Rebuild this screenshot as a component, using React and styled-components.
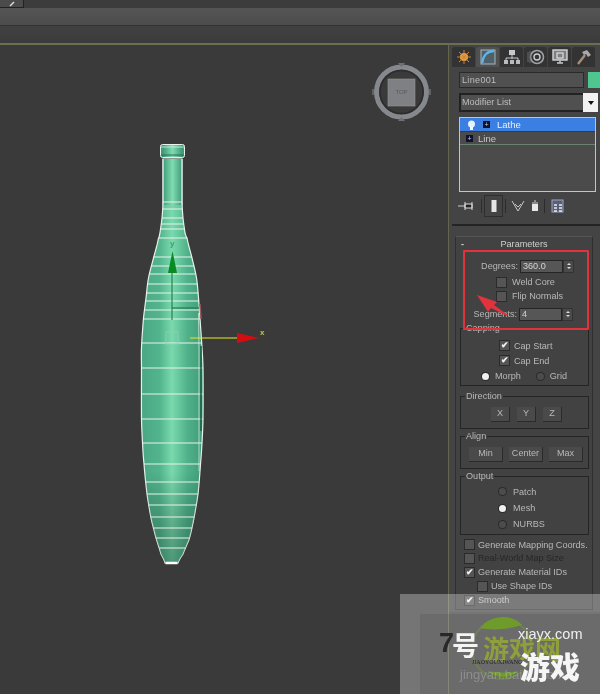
import React from "react";
import styled, { createGlobalStyle } from "styled-components";

const Global = createGlobalStyle`
  html, body { margin: 0; padding: 0; background: #3a3a3a; }
`;
const Page = styled.div`
  position: relative;
  width: 600px;
  height: 694px;
  overflow: hidden;
  display: flex;
  flex-direction: column;
  font-family: "Liberation Sans", Arial, sans-serif;
  font-size: 9.1px;
  color: #c4c4c4;
  background: #3a3a3a;
`;
const TopStrip = styled.div`
  height: 8px;
  flex: none;
  background: #3c3c3c;
  display: flex;
`;
const TopButton = styled.div`
  width: 23px;
  height: 7px;
  background: #4b4b4b;
  border: solid #222;
  border-width: 0 1px 1px 0;
  display: flex;
  justify-content: center;
  align-items: center;
`;
const MenuBand = styled.div`
  height: 17px;
  flex: none;
  background: linear-gradient(#555, #4c4c4c);
  border-bottom: 1px solid #333;
`;
const RibbonBand = styled.div`
  height: 17px;
  flex: none;
  background: linear-gradient(#414141, #3b3b3b);
  border-bottom: 2px solid #6d6e50;
`;
const Main = styled.div`
  flex: 1;
  display: flex;
  min-height: 0;
`;
const Viewport = styled.div`
  width: 448px;
  flex: none;
  background: #3a3a3a;
  border-right: 1px solid #65654e;
`;
const Scene = styled.svg`
  display: block;
  width: 448px;
  height: 650px;
  filter: blur(0.4px);
`;
const Panel = styled.div`
  width: 151px;
  flex: none;
  background: #444;
  display: flex;
  flex-direction: column;
  height: 567px;
  filter: blur(0.35px);
`;
const Tabs = styled.div`
  display: flex;
  gap: 1px;
  padding: 2px 0 0 3px;
  height: 20px;
  flex: none;
`;
const Tab = styled.div`
  width: 23px;
  height: 20px;
  background: ${(p) => (p.$active ? "#505050" : "#333")};
  border-radius: 3px 3px 0 0;
  display: flex;
  align-items: center;
  justify-content: center;
`;
const NameRow = styled.div`
  display: flex;
  gap: 4px;
  margin: 5px 0 0 10px;
  flex: none;
`;
const NameField = styled.div`
  width: 121px;
  height: 14px;
  background: #505050;
  border: 1px solid #2a2a2a;
  line-height: 14px;
  padding-left: 2px;
  letter-spacing: 0.3px;
  color: #bdbdbd;
`;
const Swatch = styled.div`
  width: 12px;
  height: 16px;
  background: #4fc68f;
`;
const ModifierRow = styled.div`
  display: flex;
  margin: 5px 0 0 10px;
  height: 19px;
  flex: none;
`;
const ModifierField = styled.div`
  width: 121px;
  background: #505050;
  border: solid #222;
  border-width: 2px 0 2px 2px;
  line-height: 15px;
  padding-left: 1px;
  color: #bdbdbd;
`;
const ModifierArrow = styled.div`
  width: 15px;
  background: #f2f2f2;
  display: flex;
  align-items: center;
  justify-content: center;
  &::after {
    content: "";
    border: 3px solid transparent;
    border-top: 4px solid #111;
    margin-top: 4px;
  }
`;
const Stack = styled.div`
  margin: 5px 0 0 10px;
  width: 135px;
  height: 73px;
  flex: none;
  background: #4b4b4b;
  border: 1px solid #b8c6dc;
`;
const StackRow = styled.div`
  display: flex;
  align-items: center;
  height: ${(p) => (p.$selected ? 13 : 12)}px;
  background: ${(p) => (p.$selected ? "#3c7fe2" : "transparent")};
  color: ${(p) => (p.$selected ? "#e6eefc" : "#c8c8c8")};
  border-bottom: ${(p) => (p.$selected ? "1px solid #3a3a3a" : "1px solid #6b7f72")};
  padding-left: ${(p) => p.$pad}px;
  gap: ${(p) => p.$gap}px;
  font-size: 9.5px;
`;
const PlusBox = styled.span`
  width: 7px;
  height: 7px;
  background: #0c1230;
  color: #ccd;
  font-size: 7px;
  line-height: 7px;
  text-align: center;
`;
const ToolRow = styled.div`
  display: flex;
  align-items: center;
  height: 22px;
  margin-top: 3px;
  padding-left: 6px;
  flex: none;
`;
const ToolSlot = styled.div`
  width: ${(p) => p.$w}px;
  height: 22px;
  display: flex;
  align-items: center;
  justify-content: center;
  box-sizing: border-box;
  border: ${(p) => (p.$on ? "1px solid #2e2e2e" : "0")};
`;
const ToolSep = styled.div`
  width: 1px;
  height: 14px;
  margin: 0 2px;
  background: #2c2c2c;
`;
const Divider = styled.div`
  height: 2px;
  margin: 7px 0 0 3px;
  background: #242424;
  flex: none;
`;
const Rollout = styled.div`
  margin: 10px 0 0 6px;
  width: 136px;
  height: 372px;
  border: 1px solid #2e2e2e;
  border-top-color: #555;
  flex: none;
  display: flex;
  flex-direction: column;
  background: #424242;
`;
const RolloutTitle = styled.div`
  position: relative;
  height: 21px;
  line-height: 15px;
  text-align: center;
  color: #d0d0d0;
  flex: none;
  &::before {
    content: "-";
    position: absolute;
    left: 5px;
    top: 0;
    font-weight: bold;
  }
`;
const Row = styled.div`
  display: flex;
  align-items: center;
  height: ${(p) => p.$h || 15}px;
  margin-top: ${(p) => p.$mt || 0}px;
  padding-left: ${(p) => p.$x || 0}px;
  flex: none;
  white-space: nowrap;
`;
const Label = styled.span`
  margin-left: ${(p) => p.$gap ?? 5}px;
  width: ${(p) => (p.$w ? `${p.$w}px` : "auto")};
  text-align: ${(p) => (p.$w ? "right" : "left")};
  color: ${(p) => p.$color || "#b8b8b8"};
`;
const Spinner = styled.div`
  display: flex;
  margin-left: 2px;
  height: 13px;
`;
const SpinnerField = styled.div`
  width: 43px;
  background: #565656;
  border: 1px solid #242424;
  box-sizing: border-box;
  line-height: 11px;
  padding-left: 2px;
  color: #d4d4d4;
`;
const SpinnerArrows = styled.div`
  width: 11px;
  background: #4a4a4a;
  border: 1px solid #333;
  box-sizing: border-box;
  display: flex;
  flex-direction: column;
  align-items: center;
  justify-content: center;
  gap: 2px;
  &::before {
    content: "";
    border: 2px solid transparent;
    border-top: 0;
    border-bottom: 2px solid #ddd;
  }
  &::after {
    content: "";
    border: 2px solid transparent;
    border-bottom: 0;
    border-top: 2px solid #ddd;
  }
`;
const Check = styled.span`
  width: 9px;
  height: 9px;
  flex: none;
  background: #555;
  border: 1px solid #2b2b2b;
  display: flex;
  align-items: center;
  justify-content: center;
  color: #f2f2f2;
  font-size: 9px;
  line-height: 9px;
  font-weight: bold;
`;
const Radio = styled.span`
  width: 7px;
  height: 7px;
  flex: none;
  margin-left: ${(p) => p.$ml || 0}px;
  border-radius: 50%;
  background: ${(p) => (p.$on ? "#f0f0f0" : "#4c4c4c")};
  box-shadow: 0 0 0 1px #2b2b2b;
`;
const Group = styled.div`
  margin: ${(p) => p.$mt}px 0 0 4px;
  width: 127px;
  height: ${(p) => p.$h}px;
  flex: none;
  border: 1px solid #252525;
  display: flex;
  flex-direction: column;
`;
const Legend = styled.div`
  margin: -6px 0 0 4px;
  padding: 0 1px;
  height: 11px;
  line-height: 11px;
  width: fit-content;
  background: #424242;
  color: #b8b8b8;
  flex: none;
`;
const Buttons = styled.div`
  display: flex;
  gap: ${(p) => p.$gap}px;
  padding-left: ${(p) => p.$x}px;
  margin-top: ${(p) => p.$mt || 0}px;
`;
const PushButton = styled.div`
  width: ${(p) => p.$w}px;
  height: 14px;
  line-height: 13px;
  text-align: center;
  background: #4a4a4a;
  border: solid #2a2a2a;
  border-width: 0 1px 1px 0;
  color: #b8b8b8;
`;
const Annotation = styled.div`
  position: absolute;
  left: 463px;
  top: 250px;
  width: 122px;
  height: 76px;
  border: 2px solid #e2333c;
  border-radius: 1px;
`;
const ArrowMark = styled.svg`
  position: absolute;
  left: 474px;
  top: 292px;
  width: 36px;
  height: 26px;
`;
const Watermark = styled.div`
  position: absolute;
  left: 400px;
  top: 594px;
  width: 200px;
  height: 100px;
  background: rgba(255, 255, 255, 0.3);
  filter: blur(0.3px);
`;
const WatermarkPlate = styled.div`
  position: absolute;
  left: 20px;
  top: 20px;
  right: 0;
  bottom: 0;
  background: rgba(40, 40, 40, 0.12);
`;
const Seal = styled.svg`
  position: absolute;
  left: 70px;
  top: 19px;
  width: 66px;
  height: 72px;
`;
const Mark = styled.span`
  position: absolute;
  left: ${(p) => p.$x}px;
  top: ${(p) => p.$y}px;
  font-family: ${(p) => p.$font || '"Noto Sans CJK SC", sans-serif'};
  font-size: ${(p) => p.$size}px;
  font-weight: ${(p) => p.$weight || 700};
  line-height: 1;
  color: ${(p) => p.$color};
  white-space: nowrap;
`;

// bottle profile: [y, left x, right x]
const profile = [
  [158, 163, 182], [201, 163, 182], [217, 162, 183], [232, 160, 185], [237, 158.5, 187],
  [257, 153.5, 192], [277, 148.5, 196.5], [297, 146, 198.5], [317, 143.5, 200], [347, 141.5, 202],
  [367, 141.5, 203], [418, 141.5, 203], [442, 142.5, 202], [463, 144, 200.5], [493, 147, 198],
  [517, 151, 194], [537, 156, 189.5], [553, 161, 183], [562, 165, 178],
];
// smooth the profile so the tip and shoulder read as curves
const catmull = (a, b, c, d, t) =>
  0.5 * (2 * b + (c - a) * t + (2 * a - 5 * b + 4 * c - d) * t * t + (3 * b - a - 3 * c + d) * t * t * t);
const outline = [];
for (let i = 0; i < profile.length - 1; i++) {
  const p0 = profile[Math.max(i - 1, 0)];
  const p1 = profile[i];
  const p2 = profile[i + 1];
  const p3 = profile[Math.min(i + 2, profile.length - 1)];
  for (let s = 0; s < 6; s++) {
    const t = s / 6;
    outline.push([
      p1[0] + (p2[0] - p1[0]) * t,
      catmull(p0[1], p1[1], p2[1], p3[1], t),
      catmull(p0[2], p1[2], p2[2], p3[2], t),
    ]);
  }
}
outline.push(profile[profile.length - 1]);

const rings = [
  201, 208, 217, 223, 228, 237, 256, 265, 273, 283, 292, 300, 309, 318, 342, 367, 393, 418,
  442, 463, 481, 493, 504, 516, 527, 537, 547,
];
const edgeAt = (y) => {
  for (let i = 0; i < outline.length - 1; i++) {
    const a = outline[i];
    const b = outline[i + 1];
    if (y >= a[0] && y <= b[0]) {
      const t = (y - a[0]) / (b[0] - a[0]);
      return [a[1] + (b[1] - a[1]) * t, a[2] + (b[2] - a[2]) * t];
    }
  }
  return [160, 180];
};
const bodyPath =
  "M" +
  outline.map((p) => `${p[1]} ${p[0]}`).join(" L") +
  " L" +
  [...outline].reverse().map((p) => `${p[2]} ${p[0]}`).join(" L") +
  " Z";

const Bottle = () => (
  <g>
    <defs>
      <linearGradient id="glass" x1="141" x2="203" y1="0" y2="0" gradientUnits="userSpaceOnUse">
        <stop offset="0" stopColor="#4aa884" />
        <stop offset="0.3" stopColor="#52b48c" />
        <stop offset="0.5" stopColor="#7ad9ad" />
        <stop offset="0.75" stopColor="#4fb18a" />
        <stop offset="1" stopColor="#3f9c78" />
      </linearGradient>
      <linearGradient id="neck" x1="163" x2="182" y1="0" y2="0" gradientUnits="userSpaceOnUse">
        <stop offset="0" stopColor="#3f9c78" />
        <stop offset="0.5" stopColor="#80dcb2" />
        <stop offset="1" stopColor="#3f9c78" />
      </linearGradient>
      <linearGradient id="tip" x1="0" x2="0" y1="470" y2="562" gradientUnits="userSpaceOnUse">
        <stop offset="0" stopColor="#000" stopOpacity="0" />
        <stop offset="1" stopColor="#0a3a28" stopOpacity="0.4" />
      </linearGradient>
    </defs>
    <path d={bodyPath} fill="url(#glass)" stroke="#e4f2eb" strokeWidth="1.2" />
    <path d={bodyPath} fill="url(#tip)" />
    <rect x="163.5" y="158" width="18" height="46" fill="url(#neck)" />
    <line x1="163" y1="158" x2="163" y2="204" stroke="#dcefe6" />
    <line x1="182" y1="158" x2="182" y2="204" stroke="#dcefe6" />
    <rect x="160.5" y="143.5" width="24" height="13" rx="2" fill="url(#neck)" stroke="#e4f4ec" />
    <line x1="161" y1="146" x2="184" y2="146" stroke="#dff2e9" strokeWidth="0.8" />
    <line x1="161" y1="154" x2="184" y2="154" stroke="#2c6a54" strokeWidth="1" />
    {rings.map((y) => {
      const [l, r] = edgeAt(y);
      return <line key={y} x1={l} y1={y} x2={r} y2={y} stroke="#e6f3ec" strokeWidth="1" />;
    })}
    <path d="M198.5 312 L199 350 L199 470" fill="none" stroke="#cfe6da" strokeWidth="0.8" />
    <path d="M201 345 L201 430" fill="none" stroke="#14593f" strokeWidth="1.4" />
    <path d="M200 303 L201 318" fill="none" stroke="#a05a5a" strokeWidth="1.4" />
    <path d="M165.5 562 L177.5 562" stroke="#fff" strokeWidth="2.5" />
  </g>
);

const Gizmo = () => (
  <g fontFamily="Liberation Sans, sans-serif" fontWeight="bold" fontSize="8">
    <rect x="166" y="331" width="12" height="12" fill="none" stroke="#8fd0b2" strokeWidth="0.8" />
    <line x1="172" y1="268" x2="172" y2="319" stroke="#14703c" strokeWidth="1" />
    <line x1="172" y1="307" x2="199" y2="307" stroke="#14703c" strokeWidth="1" />
    <polygon points="172.5,250 177,272 168,272" fill="#0a8a22" />
    <text x="170" y="245" fill="#3ea05a">y</text>
    <line x1="190" y1="337" x2="238" y2="337" stroke="#e8e820" strokeWidth="1" />
    <polygon points="237,332 259,337 237,342" fill="#d40d12" />
    <text x="260" y="334" fill="#c4c44a">x</text>
  </g>
);

const ViewCube = () => (
  <g>
    <circle cx="401.5" cy="91" r="25" fill="#3a3a3a" stroke="#85898d" strokeWidth="5" />
    <circle cx="401.5" cy="91" r="21.5" fill="none" stroke="#2c2c2c" strokeWidth="1.5" />
    <rect x="388" y="78" width="27" height="27" fill="#7f8084" stroke="#94959a" strokeWidth="0.6" />
    <text x="401.5" y="93" textAnchor="middle" fontSize="6" fill="#5a5a5e" fontFamily="Liberation Sans, sans-serif">
      TOP
    </text>
    <polygon points="398,62 405,62 401.5,66" fill="#6e7074" />
    <polygon points="398,120 405,120 401.5,116" fill="#6e7074" />
    <rect x="372" y="88" width="2" height="6" fill="#5f6165" />
    <rect x="429" y="88" width="2" height="6" fill="#5f6165" />
  </g>
);

const ArrowSlot = () => (
  <svg width="20" height="16" viewBox="0 0 20 16">
    <line x1="1" y1="8" x2="8" y2="8" stroke="#ccc" />
    <path d="M8 4 L8 12 M15 4 L15 12 M8 6 L15 6 L15 10 L8 10 Z" stroke="#ddd" fill="#222" />
  </svg>
);

const TabIcons = [
  <svg key="a" width="16" height="16" viewBox="0 0 16 16">
    <circle cx="8" cy="8" r="4" fill="#f0a64a" />
    <path d="M8 1 V15 M1 8 H15 M3 3 L13 13 M13 3 L3 13" stroke="#c98434" strokeWidth="1" />
  </svg>,
  <svg key="b" width="18" height="18" viewBox="0 0 18 18">
    <rect x="2" y="2" width="14" height="14" fill="#4f6068" stroke="#a7b6bd" />
    <path d="M3 15 C4 7 9 3 15 3" fill="none" stroke="#5fb4ec" strokeWidth="2.4" />
  </svg>,
  <svg key="c" width="18" height="16" viewBox="0 0 18 16">
    <rect x="6" y="1" width="6" height="5" fill="#c4c8cc" />
    <path d="M9 6 V10 M3 12 V9 H15 V12" stroke="#c4c8cc" fill="none" />
    <rect x="1" y="11" width="4" height="4" fill="#b8bcc0" />
    <rect x="7" y="11" width="4" height="4" fill="#b8bcc0" />
    <rect x="13" y="11" width="4" height="4" fill="#b8bcc0" />
  </svg>,
  <svg key="d" width="18" height="16" viewBox="0 0 18 16">
    <circle cx="10" cy="8" r="6.5" fill="none" stroke="#9ea2a6" strokeWidth="1.6" />
    <circle cx="10" cy="8" r="3" fill="none" stroke="#c8cbce" strokeWidth="1.4" />
    <path d="M1 3 V13 M3 2 V14" stroke="#6a6a6a" />
  </svg>,
  <svg key="e" width="18" height="16" viewBox="0 0 18 16">
    <rect x="2" y="1" width="14" height="10" fill="#7c8084" stroke="#d4d6d8" strokeWidth="1.4" />
    <rect x="6" y="4" width="6" height="5" fill="none" stroke="#eee" />
    <path d="M6 14 H12 M9 11 V14" stroke="#c8c8c8" strokeWidth="1.4" />
  </svg>,
  <svg key="f" width="18" height="16" viewBox="0 0 18 16">
    <path d="M3 15 L10 6" stroke="#a58e76" strokeWidth="2.4" />
    <path d="M7 3 L12 1 L16 6 L13 8 L11 5 L9 6 Z" fill="#a9a9a9" />
  </svg>,
];

const Spin = ({ label, value, w, x, mt }) => (
  <Row $x={x} $mt={mt} $h={16}>
    <Label $gap={0} $w={w}>{label}</Label>
    <Spinner>
      <SpinnerField>{value}</SpinnerField>
      <SpinnerArrows />
    </Spinner>
  </Row>
);

const CheckRow = ({ label, on, x, mt, h, color, gap }) => (
  <Row $x={x} $mt={mt} $h={h}>
    <Check>{on ? "✔" : ""}</Check>
    <Label $color={color} $gap={gap}>{label}</Label>
  </Row>
);

export default function App() {
  return (
    <Page>
      <Global />
      <TopStrip>
        <TopButton>
          <svg width="6" height="6" viewBox="0 0 6 6">
            <path d="M1 5 L5 1" stroke="#ddd" strokeWidth="1.4" />
          </svg>
        </TopButton>
      </TopStrip>
      <MenuBand />
      <RibbonBand />
      <Main>
        <Viewport>
          <Scene viewBox="0 44 448 650">
            <ViewCube />
            <Bottle />
            <Gizmo />
          </Scene>
        </Viewport>
        <Panel>
          <Tabs>
            {TabIcons.map((icon, i) => (
              <Tab key={i} $active={i === 1}>{icon}</Tab>
            ))}
          </Tabs>
          <NameRow>
            <NameField>Line001</NameField>
            <Swatch />
          </NameRow>
          <ModifierRow>
            <ModifierField>Modifier List</ModifierField>
            <ModifierArrow />
          </ModifierRow>
          <Stack>
            <StackRow $selected $pad={7} $gap={7}>
              <svg width="9" height="10" viewBox="0 0 9 10">
                <circle cx="4.5" cy="4" r="3.5" fill="#e6f2ff" />
                <rect x="3" y="7" width="3" height="3" fill="#fff" />
              </svg>
              <PlusBox>+</PlusBox>
              <span>Lathe</span>
            </StackRow>
            <StackRow $pad={6} $gap={5}>
              <PlusBox>+</PlusBox>
              <span>Line</span>
            </StackRow>
          </Stack>
          <ToolRow>
            <ToolSlot $w={24}><ArrowSlot /></ToolSlot>
            <ToolSep />
            <ToolSlot $w={19} $on>
              <svg width="6" height="14" viewBox="0 0 6 14">
                <rect x="0.5" y="1" width="5" height="12" fill="#e6e6e6" />
              </svg>
            </ToolSlot>
            <ToolSep />
            <ToolSlot $w={20}>
              <svg width="14" height="14" viewBox="0 0 14 14">
                <path d="M1 2 L7 12 L13 2 M4 5 L7 8 L10 5" fill="none" stroke="#c8c8c8" />
              </svg>
            </ToolSlot>
            <ToolSlot $w={14}>
              <svg width="8" height="12" viewBox="0 0 8 12">
                <rect x="1" y="4" width="6" height="7" fill="#e8e8e8" />
                <path d="M1 3 H7 M3 1 H5" stroke="#ccc" />
              </svg>
            </ToolSlot>
            <ToolSep />
            <ToolSlot $w={22}>
              <svg width="14" height="14" viewBox="0 0 14 14">
                <rect x="1" y="1" width="11" height="12" fill="#5a5f72" stroke="#9aa4c8" />
                <path d="M3 6 H6 M8 6 H11 M3 9 H6 M8 9 H11 M3 12 H6 M8 12 H11" stroke="#eee" strokeWidth="1.5" />
              </svg>
            </ToolSlot>
          </ToolRow>
          <Divider />
          <Rollout>
            <RolloutTitle>Parameters</RolloutTitle>
            <Spin label="Degrees:" value="360.0" w={61} x={1} />
            <CheckRow label="Weld Core" x={40} mt={1} h={14} gap={5} />
            <CheckRow label="Flip Normals" x={40} h={14} gap={5} />
            <Spin label="Segments:" value="4" w={60} x={1} mt={3} />
            <Group $mt={6} $h={56}>
              <Legend>Capping</Legend>
              <CheckRow label="Cap Start" x={38} mt={4} h={15} gap={4} on />
              <CheckRow label="Cap End" x={38} h={15} gap={4} on />
              <Row $x={21} $h={16}>
                <Radio $on />
                <Label $gap={6}>Morph</Label>
                <Radio $ml={16} />
                <Label $gap={6}>Grid</Label>
              </Row>
            </Group>
            <Group $mt={10} $h={31}>
              <Legend>Direction</Legend>
              <Buttons $x={30} $gap={7} $mt={5}>
                <PushButton $w={18}>X</PushButton>
                <PushButton $w={18}>Y</PushButton>
                <PushButton $w={18}>Z</PushButton>
              </Buttons>
            </Group>
            <Group $mt={7} $h={31}>
              <Legend>Align</Legend>
              <Buttons $x={8} $gap={6} $mt={5}>
                <PushButton $w={33}>Min</PushButton>
                <PushButton $w={33}>Center</PushButton>
                <PushButton $w={33}>Max</PushButton>
              </Buttons>
            </Group>
            <Group $mt={7} $h={57}>
              <Legend>Output</Legend>
              <Row $x={38} $mt={2} $h={15}><Radio /><Label $gap={7}>Patch</Label></Row>
              <Row $x={38} $mt={1} $h={16}><Radio $on /><Label $gap={7}>Mesh</Label></Row>
              <Row $x={38} $h={16}><Radio /><Label $gap={7}>NURBS</Label></Row>
            </Group>
            <CheckRow label="Generate Mapping Coords." x={8} mt={3} h={13} gap={3} />
            <CheckRow label="Real-World Map Size" x={8} h={14} gap={3} color="#262626" />
            <CheckRow label="Generate Material IDs" x={8} h={14} gap={3} on />
            <CheckRow label="Use Shape IDs" x={21} h={14} gap={3} />
            <CheckRow label="Smooth" x={8} h={14} gap={3} on />
          </Rollout>
        </Panel>
      </Main>
      <Annotation />
      <ArrowMark viewBox="0 0 36 26">
        <polygon points="3,3 23,10 20,13 34,23 33,24 17,16 14,20" fill="#e2333c" />
      </ArrowMark>
      <Watermark>
        <WatermarkPlate />
        <Seal viewBox="0 0 66 72">
          <circle cx="32" cy="36" r="30" fill="none" stroke="#6f7f58" strokeWidth="2" />
          <path d="M10 15 C20 2 42 0 52 12 C40 16 24 18 10 15 Z" fill="#6f9a2c" />
          <path d="M18 58 C28 66 40 66 48 58 C38 60 28 60 18 58 Z" fill="#6f9a2c" />
        </Seal>
        <Mark $x={60} $y={74} $size={13} $weight={400} $color="rgba(255,255,255,0.22)" $font={'"Liberation Sans", sans-serif'}>jingyan.baidu.com</Mark>
        <Mark $x={39} $y={36} $size={27} $color="#26282a" $font={'"Liberation Sans", sans-serif'}>7</Mark>
        <Mark $x={52} $y={37} $size={27} $color="#f4f4f4">号</Mark>
        <Mark $x={83} $y={41} $size={26} $color="#8f9f3c">游戏网</Mark>
        <Mark $x={118} $y={33} $size={14.5} $weight={400} $color="#f0f0f0" $font={'"Liberation Sans", sans-serif'}>xiayx.com</Mark>
        <Mark $x={72} $y={65} $size={6} $weight={400} $color="#222" $font={'"Liberation Serif", serif'}>JIAOYOUXIWANG</Mark>
        <Mark $x={120} $y={56} $size={30} $weight={900} $color="#f6f6f6">游戏</Mark>
      </Watermark>
    </Page>
  );
}
